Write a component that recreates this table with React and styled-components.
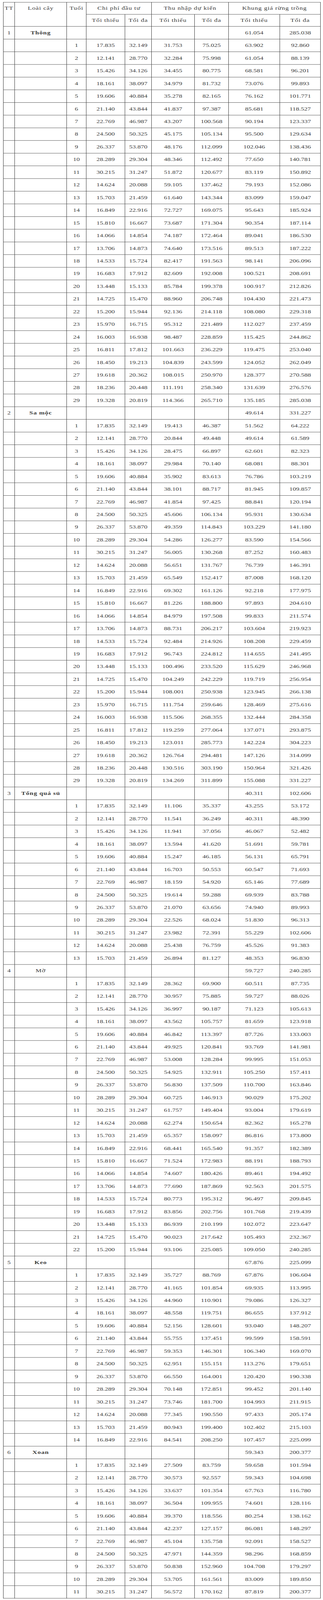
import React from 'react';
import styled, { createGlobalStyle } from 'styled-components';

const GlobalStyle = createGlobalStyle`
  body {
    margin: 0;
    background: #fff;
    font-family: "Liberation Serif", "Times New Roman", serif;
    color: #3b3b3b;
  }
`;

// the page is drawn for a 5175px tall window; the browser may give us less,
// so the whole sheet is squeezed vertically to still fit in one picture
const PAGE_HEIGHT = 5175;

// chi phí đầu tư is the same for every species, by age
const COST = [
  ['17.835', '32.149'], ['12.141', '28.770'], ['15.426', '34.126'], ['18.161', '38.097'],
  ['19.606', '40.884'], ['21.140', '43.844'], ['22.769', '46.987'], ['24.500', '50.325'],
  ['26.337', '53.870'], ['28.289', '29.304'], ['30.215', '31.247'], ['14.624', '20.088'],
  ['15.703', '21.459'], ['16.849', '22.916'], ['15.810', '16.667'], ['14.066', '14.854'],
  ['13.706', '14.873'], ['14.533', '15.724'], ['16.683', '17.912'], ['13.448', '15.133'],
  ['14.725', '15.470'], ['15.200', '15.944'], ['15.970', '16.715'], ['16.003', '16.938'],
  ['16.811', '17.812'], ['18.450', '19.213'], ['19.618', '20.362'], ['18.236', '20.448'],
  ['19.328', '20.819'],
];

// per age: thu nhập min, max, khung giá min, max
const SPECIES = [
  {
    name: 'Thông', bold: true, min: '61.054', max: '285.038',
    rows: `31.753 75.025 63.902 92.860|32.284 75.998 61.054 88.139|34.455 80.775 68.581 96.201|34.979 81.732 73.076 99.893|35.278 82.165 76.162 101.771|41.837 97.387 85.681 118.527|43.207 100.568 90.194 123.337|45.175 105.134 95.500 129.634|48.176 112.099 102.046 138.436|48.346 112.492 77.650 140.781|51.872 120.677 83.119 150.892|59.105 137.462 79.193 152.086|61.640 143.344 83.099 159.047|72.727 169.075 95.643 185.924|73.687 171.304 90.354 187.114|74.187 172.464 89.041 186.530|74.640 173.516 89.513 187.222|82.417 191.563 98.141 206.096|82.609 192.008 100.521 208.691|85.784 199.378 100.917 212.826|88.960 206.748 104.430 221.473|92.136 214.118 108.080 229.318|95.312 221.489 112.027 237.459|98.487 228.859 115.425 244.862|101.663 236.229 119.475 253.040|104.839 243.599 124.052 262.049|108.015 250.970 128.377 270.588|111.191 258.340 131.639 276.576|114.366 265.710 135.185 285.038`,
  },
  {
    name: 'Sa mộc', bold: true, min: '49.614', max: '331.227',
    rows: `19.413 46.387 51.562 64.222|20.844 49.448 49.614 61.589|28.475 66.897 62.601 82.323|29.984 70.140 68.081 88.301|35.902 83.613 76.786 103.219|38.101 88.717 81.945 109.857|41.854 97.425 88.841 120.194|45.606 106.134 95.931 130.634|49.359 114.843 103.229 141.180|54.286 126.277 83.590 154.566|56.005 130.268 87.252 160.483|56.651 131.767 76.739 146.391|65.549 152.417 87.008 168.120|69.302 161.126 92.218 177.975|81.226 188.800 97.893 204.610|84.979 197.508 99.833 211.574|88.731 206.217 103.604 219.923|92.484 214.926 108.208 229.459|96.743 224.812 114.655 241.495|100.496 233.520 115.629 246.968|104.249 242.229 119.719 256.954|108.001 250.938 123.945 266.138|111.754 259.646 128.469 275.616|115.506 268.355 132.444 284.358|119.259 277.064 137.071 293.875|123.011 285.773 142.224 304.223|126.764 294.481 147.126 314.099|130.516 303.190 150.964 321.426|134.269 311.899 155.088 331.227`,
  },
  {
    name: 'Tống quá sủ', bold: true, min: '40.311', max: '102.606',
    rows: `11.106 35.337 43.255 53.172|11.541 36.249 40.311 48.390|11.941 37.056 46.067 52.482|13.594 41.620 51.691 59.781|15.247 46.185 56.131 65.791|16.703 50.553 60.547 71.693|18.159 54.920 65.146 77.689|19.614 59.288 69.939 83.788|21.070 63.656 74.940 89.993|22.526 68.024 51.830 96.313|23.982 72.391 55.229 102.606|25.438 76.759 45.526 91.383|26.894 81.127 48.353 96.830`,
  },
  {
    name: 'Mỡ', bold: false, min: '59.727', max: '240.285',
    rows: `28.362 69.900 60.511 87.735|30.957 75.885 59.727 88.026|36.997 90.187 71.123 105.613|43.562 105.757 81.659 123.918|46.842 113.397 87.726 133.003|49.925 120.841 93.769 141.981|53.008 128.284 99.995 151.053|54.925 132.911 105.250 157.411|56.830 137.509 110.700 163.846|60.725 146.913 90.029 175.202|61.757 149.404 93.004 179.619|62.274 150.654 82.362 165.278|65.357 158.097 86.816 173.800|68.441 165.540 91.357 182.389|71.524 172.983 88.191 188.793|74.607 180.426 89.461 194.492|77.690 187.869 92.563 201.575|80.773 195.312 96.497 209.845|83.856 202.756 101.768 219.439|86.939 210.199 102.072 223.647|90.023 217.642 105.493 232.367|93.106 225.085 109.050 240.285`,
  },
  {
    name: 'Keo', bold: true, min: '67.876', max: '225.099',
    rows: `35.727 88.769 67.876 106.604|41.165 101.854 69.935 113.995|44.960 110.901 79.086 126.327|48.558 119.751 86.655 137.912|52.156 128.601 93.040 148.207|55.755 137.451 99.599 158.591|59.353 146.301 106.340 169.070|62.951 155.151 113.276 179.651|66.550 164.001 120.420 190.338|70.148 172.851 99.452 201.140|73.746 181.700 104.993 211.915|77.345 190.550 97.433 205.174|80.943 199.400 102.402 215.103|84.541 208.250 107.457 225.099`,
  },
  {
    name: 'Xoan', bold: true, min: '59.343', max: '200.377',
    rows: `27.509 83.759 59.658 101.594|30.573 92.557 59.343 104.698|33.637 101.354 67.763 116.780|36.504 109.955 74.601 128.116|39.370 118.556 80.254 138.162|42.237 127.157 86.081 148.297|45.104 135.758 92.091 158.527|47.971 144.359 98.296 168.859|50.838 152.960 104.708 179.297|53.705 161.561 83.009 189.850|56.572 170.162 87.819 200.377`,
  },
];

const COLS = [29, 133, 50, 99, 68, 110, 87, 131, 104];

const Frame = styled.div`
  height: 100vh;
  overflow: hidden;
`;

const Sheet = styled.div`
  padding: 7px 8px 0;
  transform: scaleY(${(p) => p.$k});
  transform-origin: 0 0;
`;

const Table = styled.table`
  width: 100%;
  border-collapse: collapse;
  table-layout: fixed;
  font-size: 17px;
  line-height: 20px;
`;

const Col = styled.col`
  width: ${(p) => p.$w}px;
`;

const HeadRow = styled.tr`
  height: 39px;
`;

const Row = styled.tr`
  height: 41px;
`;

const HeadCell = styled.th`
  border: 1px solid #333;
  font-weight: normal;
  text-align: center;
  letter-spacing: 0.9px;
  padding: ${(p) => (p.$top ? '9px 0 0' : '0')};
  vertical-align: ${(p) => (p.$top ? 'top' : 'middle')};
  white-space: nowrap;
`;

const Cell = styled.td`
  border: 1px solid #333;
  text-align: center;
  vertical-align: middle;
  padding: 0;
  white-space: nowrap;
`;

const NameCell = styled(Cell)`
  font-weight: ${(p) => (p.$bold ? 'bold' : 'normal')};
  letter-spacing: 0.9px;
`;

function SpeciesBlock({ index, species }) {
  const rows = species.rows.split('|').map((r) => r.split(' '));
  return (
    <>
      <Row>
        <Cell>{index}</Cell>
        <NameCell $bold={species.bold}>{species.name}</NameCell>
        <Cell />
        <Cell />
        <Cell />
        <Cell />
        <Cell />
        <Cell>{species.min}</Cell>
        <Cell>{species.max}</Cell>
      </Row>
      {rows.map((r, i) => (
        <Row key={i}>
          <Cell />
          <Cell />
          <Cell>{i + 1}</Cell>
          <Cell>{COST[i][0]}</Cell>
          <Cell>{COST[i][1]}</Cell>
          {r.map((v, j) => (
            <Cell key={j}>{v}</Cell>
          ))}
        </Row>
      ))}
    </>
  );
}

export default function App() {
  const k = Math.min(1, window.innerHeight / PAGE_HEIGHT);
  return (
    <Frame>
      <GlobalStyle />
      <Sheet $k={k}>
        <Table>
          <colgroup>
            {COLS.map((w, i) => (
              <Col key={i} $w={w} />
            ))}
          </colgroup>
          <thead>
            <HeadRow>
              <HeadCell rowSpan={2} $top>TT</HeadCell>
              <HeadCell rowSpan={2} $top>Loài cây</HeadCell>
              <HeadCell rowSpan={2} $top>Tuổi</HeadCell>
              <HeadCell colSpan={2}>Chi phí đầu tư</HeadCell>
              <HeadCell colSpan={2}>Thu nhập dự kiến</HeadCell>
              <HeadCell colSpan={2}>Khung giá rừng trồng</HeadCell>
            </HeadRow>
            <HeadRow>
              <HeadCell>Tối thiểu</HeadCell>
              <HeadCell>Tối đa</HeadCell>
              <HeadCell>Tối thiểu</HeadCell>
              <HeadCell>Tối đa</HeadCell>
              <HeadCell>Tối thiểu</HeadCell>
              <HeadCell>Tối đa</HeadCell>
            </HeadRow>
          </thead>
          <tbody>
            {SPECIES.map((s, i) => (
              <SpeciesBlock key={s.name} index={i + 1} species={s} />
            ))}
          </tbody>
        </Table>
      </Sheet>
    </Frame>
  );
}
